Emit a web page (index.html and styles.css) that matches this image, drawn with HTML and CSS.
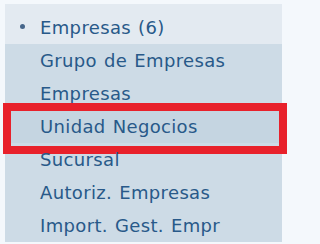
FILE: index.html
```html
<!DOCTYPE html>
<html lang="es">
<head>
<meta charset="utf-8">
<title>Menú Empresas</title>
<link rel="stylesheet" href="styles.css">
</head>
<body>
<div class="menu">
  <div class="menu-header"><span class="bullet"></span>Empresas (6)</div>
  <ul class="menu-list">
    <li class="menu-item">Grupo de Empresas</li>
    <li class="menu-item">Empresas</li>
    <li class="menu-item is-active">Unidad Negocios<span class="highlight"></span></li>
    <li class="menu-item">Sucursal</li>
    <li class="menu-item">Autoriz. Empresas</li>
    <li class="menu-item">Import. Gest. Empr</li>
  </ul>
</div>
</body>
</html>
```

FILE: styles.css
```css
html, body {
  margin: 0;
  padding: 0;
  background: #f4f8fc;
}

body {
  font-family: "DejaVu Sans", Verdana, sans-serif;
  font-size: 18px;
  letter-spacing: 0.35px;
  word-spacing: 1px;
  color: #285989;
}

.menu {
  width: 277px;
  margin: 4px 0 0 5px;
  background: #cddbe6;
}

.menu-header {
  display: flex;
  align-items: center;
  height: 40px;
  box-sizing: border-box;
  padding: 7px 0 0 15px;
  line-height: 33px;
  background: #e3eaf1;
}

.bullet {
  flex: none;
  width: 5px;
  height: 5px;
  border-radius: 50%;
  background: #46668a;
  margin-right: 15px;
  margin-top: -2px;
}

.menu-list {
  list-style: none;
  margin: 0;
  padding: 0;
}

.menu-item {
  position: relative;
  height: 33px;
  line-height: 33px;
  padding-left: 35px;
  white-space: nowrap;
}

.menu-item.is-active {
  background: #c5d5e1;
}

.highlight {
  position: absolute;
  left: -2px;
  top: -7px;
  width: 284px;
  height: 51px;
  box-sizing: border-box;
  border: 8.5px solid #e8212b;
}
```
